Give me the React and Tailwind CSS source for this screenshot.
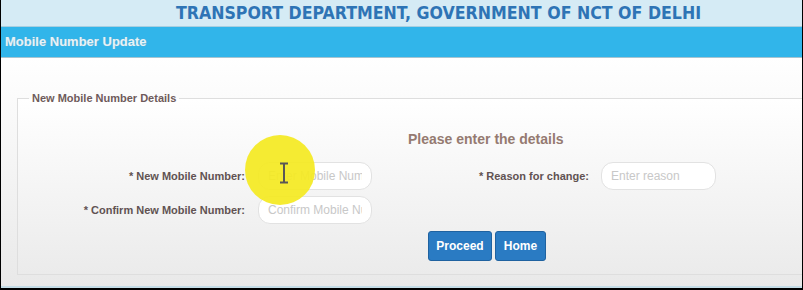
export default function App() {
  const font = { fontFamily: '"Liberation Sans", Arial, sans-serif' };
  return (
    <div className="relative w-[803px] h-[290px] bg-black pl-[1px] pr-[1px] pb-[2px] overflow-hidden" style={font}>
      <div className="flex flex-col h-full">
        <div className="h-[27px] bg-[#d5ebf5] border-b border-[#a8cfe0] flex items-center justify-center pl-[74px]">
          <span className="text-[17.6px] font-bold text-[#2e74b5]" style={{ fontFamily: '"DejaVu Sans Condensed", "DejaVu Sans", sans-serif' }}>
            TRANSPORT DEPARTMENT, GOVERNMENT OF NCT OF DELHI
          </span>
        </div>
        <div className="h-[30px] bg-[#31b5ea] flex items-center px-[4px]">
          <span className="text-[13px] font-bold text-[#e6f3f9] [text-shadow:0_0_1px_#7fa9bd]">Mobile Number Update</span>
        </div>
        <div className="h-[1px] bg-[#a7c4d0]" />
        <div className="flex-1 bg-gradient-to-b from-white to-[#e9e9e9] pt-[34px] pb-[11px] flex flex-col">
          <fieldset className="ml-[16px] flex-1 border border-r-0 border-[#dedede] bg-gradient-to-b from-white to-[#ebebeb]">
            <legend className="ml-[11px] px-[3px] text-[11px] leading-[13px] font-bold text-[#6e5a5a]">New Mobile Number Details</legend>
            <div className="pl-[390px] mt-[26px] text-[14px] leading-[16px] font-bold text-[#957a71]">Please enter the details</div>
            <div className="mt-[15px] flex items-center h-[28px]">
              <div className="w-[227px] text-right text-[11px] font-bold text-[#615252]">* New Mobile Number:</div>
              <input className="ml-[13px] w-[114px] h-[28px] rounded-[12px] border-[1.5px] border-[#e2e2e2] bg-white px-[9px] text-[12px] placeholder:text-[#c8c8c8] outline-none" placeholder="Enter Mobile Number" />
              <div className="w-[217px] text-right text-[11px] font-bold text-[#615252]">* Reason for change:</div>
              <input className="ml-[12px] w-[115px] h-[28px] rounded-[12px] border-[1.5px] border-[#e2e2e2] bg-white px-[9px] text-[12px] placeholder:text-[#c8c8c8] outline-none" placeholder="Enter reason" />
            </div>
            <div className="mt-[6px] flex items-center h-[28px]">
              <div className="w-[227px] text-right text-[11px] font-bold text-[#615252]">* Confirm New Mobile Number:</div>
              <input className="ml-[13px] w-[114px] h-[28px] rounded-[12px] border-[1.5px] border-[#e2e2e2] bg-white px-[9px] text-[12px] placeholder:text-[#c8c8c8] outline-none" placeholder="Confirm Mobile Number" />
            </div>
            <div className="mt-[7px] ml-[410px] flex gap-[3px]">
              <button className="w-[64px] h-[30px] rounded-[3px] bg-[#2a7bc3] border border-[#1f62a0] text-white text-[12px] font-bold">Proceed</button>
              <button className="w-[51px] h-[30px] rounded-[3px] bg-[#2a7bc3] border border-[#1f62a0] text-white text-[12px] font-bold">Home</button>
            </div>
          </fieldset>
        </div>
        <div className="h-[2px] bg-[#c5dde7]" />
      </div>
      <div className="absolute left-[245px] top-[135px] w-[70px] h-[70px] rounded-full bg-[#f4ea22] opacity-[0.93]" />
      <svg className="absolute left-[279px] top-[162px]" width="10" height="22" viewBox="0 0 10 22">
        <path d="M1 1.5h8M1 20.5h8M5 1.5v19" stroke="#5a5656" strokeWidth="2" fill="none" />
      </svg>
    </div>
  );
}
